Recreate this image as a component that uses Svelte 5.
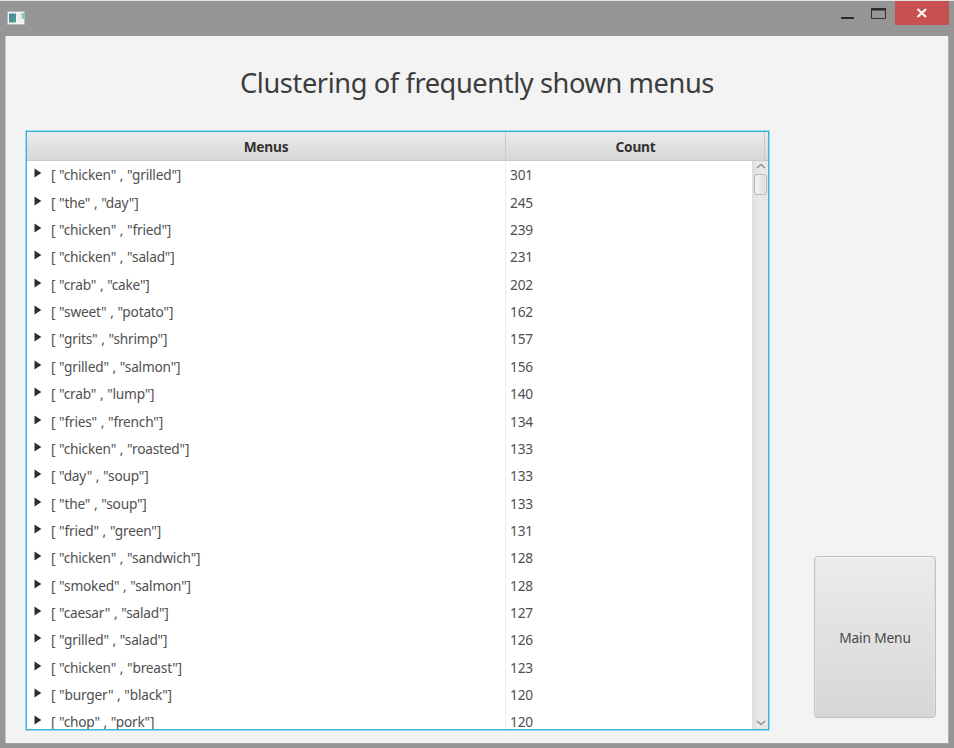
<script>
  const rows = [
    ['chicken', 'grilled', 301],
    ['the', 'day', 245],
    ['chicken', 'fried', 239],
    ['chicken', 'salad', 231],
    ['crab', 'cake', 202],
    ['sweet', 'potato', 162],
    ['grits', 'shrimp', 157],
    ['grilled', 'salmon', 156],
    ['crab', 'lump', 140],
    ['fries', 'french', 134],
    ['chicken', 'roasted', 133],
    ['day', 'soup', 133],
    ['the', 'soup', 133],
    ['fried', 'green', 131],
    ['chicken', 'sandwich', 128],
    ['smoked', 'salmon', 128],
    ['caesar', 'salad', 127],
    ['grilled', 'salad', 126],
    ['chicken', 'breast', 123],
    ['burger', 'black', 120],
    ['chop', 'pork', 120]
  ];
</script>

<div class="window">
  <header class="titlebar">
    <svg class="app-icon" width="18" height="14" viewBox="0 0 18 14">
      <defs>
        <linearGradient id="pane" x1="0" y1="0" x2="1" y2="1">
          <stop offset="0" stop-color="#4c83ad" />
          <stop offset="1" stop-color="#4fa47b" />
        </linearGradient>
      </defs>
      <rect x="0.5" y="0.5" width="17" height="13" fill="#f1f3f4" stroke="#b4babd" />
      <rect x="2" y="2.5" width="7" height="9" fill="url(#pane)" />
      <path d="M11 4h3M11 6.500h3M11 9h3" stroke="#e3e4e4" />
      <path d="M14.500 2H17V8H15.500L14.500 6Z" fill="#8bc9b6" />
    </svg>
    <div class="controls">
      <svg width="54" height="25" viewBox="0 0 54 25">
        <rect x="0" y="16" width="13" height="2" fill="#292929" />
        <path d="M30.500 8V17.500H44.500V8" fill="none" stroke="#303030" />
        <rect x="30" y="7" width="15" height="2.500" fill="#2b2b2b" />
      </svg>
      <div class="close">
        <svg width="12" height="10" viewBox="0 0 12 10">
          <path d="M1.500 1L10 9M10 1L1.500 9" stroke="#fff" stroke-width="2.100" />
        </svg>
      </div>
    </div>
  </header>

  <main>
    <h1><span>Clustering of frequently shown menus</span></h1>
    <div class="body">
      <div class="table">
        <div class="head">
          <div class="col-menus">Menus</div>
          <div class="col-count">Count</div>
          <div class="corner"></div>
        </div>
        <div class="view">
          <div class="rows">
            {#each rows as [a, b, count]}
              <div class="row">
                <div class="cell-menu">
                  <svg width="8" height="10" viewBox="0 0 8 10"><path d="M0.500 0.500L7.300 5L0.500 9.500Z" fill="#2d2d2d" /></svg>
                  <span>[ "{a}" , "{b}"]</span>
                </div>
                <div class="cell-count">{count}</div>
              </div>
            {/each}
          </div>
          <div class="scrollbar">
            <svg width="10" height="6" viewBox="0 0 10 6"><path d="M1 5L5 1.500L9 5" fill="none" stroke="#8f8f8f" stroke-width="1.500" /></svg>
            <div class="thumb"></div>
            <svg class="down" width="10" height="6" viewBox="0 0 10 6"><path d="M1 1L5 4.500L9 1" fill="none" stroke="#8f8f8f" stroke-width="1.500" /></svg>
          </div>
        </div>
      </div>
      <button>Main Menu</button>
    </div>
  </main>
</div>

<style>
  :global(body) {
    margin: 0;
  }
  .window {
    width: 954px;
    height: 748px;
    box-sizing: border-box;
    padding: 0 5px 4px;
    border-top: 1px solid #e2e2e2;
    background: #969696;
    display: flex;
    flex-direction: column;
    overflow: hidden;
    font-family: 'Noto Sans', 'Open Sans', sans-serif;
    color: #444;
  }
  .titlebar {
    height: 35px;
    flex: none;
    display: flex;
    justify-content: space-between;
  }
  .app-icon {
    margin: 10px 0 0 2px;
  }
  .controls {
    display: flex;
    align-items: flex-start;
  }
  .close {
    width: 54px;
    height: 24px;
    background: #c75050;
    display: flex;
    align-items: center;
    justify-content: center;
  }
  main {
    flex: 1;
    min-height: 0;
    box-sizing: border-box;
    background: #f3f3f3;
    box-shadow: inset 0 -1px 0 #a0a0a0, inset 1px 0 0 #c4c4c4, inset -1px 0 0 #b0b0b0;
    display: flex;
    flex-direction: column;
  }
  h1 {
    margin: 0;
    height: 94px;
    flex: none;
    box-sizing: border-box;
    padding-bottom: 2px;
    display: flex;
    align-items: center;
    font-weight: 400;
    font-size: 27.200px;
    color: #3c3c3c;
    white-space: nowrap;
  }
  h1 span {
    margin-left: 235px;
    letter-spacing: -0.390px;
  }
  .body {
    display: flex;
    align-items: flex-end;
    padding-left: 20px;
  }
  .table {
    width: 745px;
    height: 601px;
    box-sizing: border-box;
    padding: 1px;
    border: 1px solid #9bd9ec;
    background: #35b3d9;
    display: flex;
    flex-direction: column;
    border-radius: 1px;
  }
  .head {
    height: 29px;
    flex: none;
    box-sizing: border-box;
    display: flex;
    background: linear-gradient(#ebebeb, #d7d7d7);
    border-bottom: 1px solid #c8c8c8;
    font-size: 13.700px;
    font-weight: 700;
    color: #333;
    line-height: 29px;
    text-align: center;
    letter-spacing: -0.200px;
  }
  .col-menus {
    width: 479px;
    box-sizing: border-box;
    border-right: 1px solid #cacaca;
  }
  .col-count {
    width: 259px;
    box-sizing: border-box;
    padding-left: 1px;
    border-right: 1px solid #cacaca;
  }
  .view {
    flex: 1;
    min-height: 0;
    display: flex;
    background: #fff;
  }
  .rows {
    flex: 1;
    overflow: hidden;
    padding-top: 0.300px;
  }
  .row {
    height: 27.360px;
    display: flex;
    font-size: 13.700px;
    line-height: 28px;
    color: #505050;
    white-space: pre;
  }
  .cell-menu {
    width: 479px;
    box-sizing: border-box;
    border-right: 1px solid #ededed;
    padding-left: 7px;
    display: flex;
  }
  .cell-menu svg {
    margin: 7px 9px 0 0;
  }
  .cell-menu span {
    letter-spacing: -0.210px;
    word-spacing: 0.450px;
  }
  .cell-count {
    padding-left: 4px;
    letter-spacing: -0.200px;
  }
  .scrollbar {
    width: 16px;
    box-sizing: border-box;
    background: linear-gradient(90deg, #dedede, #e8e8e8 40%, #e8e8e8);
    display: flex;
    flex-direction: column;
    align-items: center;
    padding: 2px 0 3px 1px;
  }
  .thumb {
    width: 13px;
    height: 21px;
    box-sizing: border-box;
    margin-top: 5px;
    border: 1px solid #b7b7b7;
    border-radius: 3px;
    background: linear-gradient(90deg, #f3f3f3, #dcdcdc);
    box-shadow: inset 0 0 0 1px #eee;
  }
  .down {
    margin-top: auto;
  }
  button {
    width: 122px;
    height: 162px;
    margin: 0 0 13px 44px;
    padding: 0;
    border: 1px solid #c0c0c0;
    border-radius: 4px;
    background: linear-gradient(#ececec, #d6d6d6);
    box-shadow: inset 0 1px 0 #f6f6f6, inset 1px 0 0 #e2e2e2, inset -1px 0 0 #e2e2e2;
    font-family: inherit;
    font-size: 13.700px;
    letter-spacing: -0.130px;
    color: #484848;
  }
</style>
